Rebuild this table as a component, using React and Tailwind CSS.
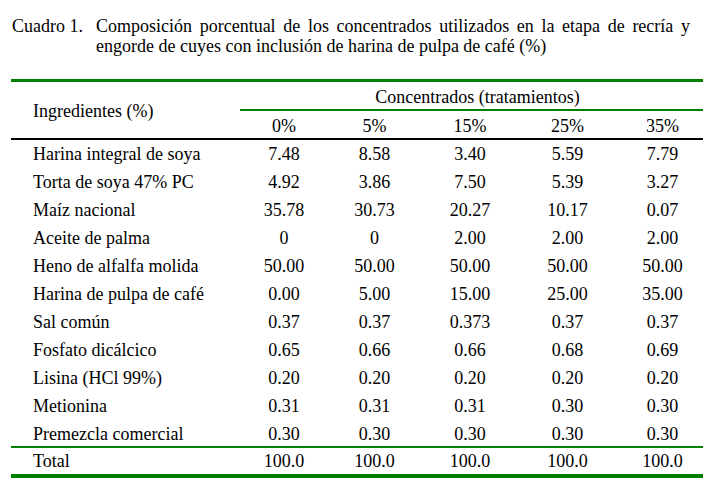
import React from 'react';

const rows = [
    ['Harina integral de soya', '7.48', '8.58', '3.40', '5.59', '7.79'],
    ['Torta de soya 47% PC', '4.92', '3.86', '7.50', '5.39', '3.27'],
    ['Maíz nacional', '35.78', '30.73', '20.27', '10.17', '0.07'],
    ['Aceite de palma', '0', '0', '2.00', '2.00', '2.00'],
    ['Heno de alfalfa molida', '50.00', '50.00', '50.00', '50.00', '50.00'],
    ['Harina de pulpa de café', '0.00', '5.00', '15.00', '25.00', '35.00'],
    ['Sal común', '0.37', '0.37', '0.373', '0.37', '0.37'],
    ['Fosfato dicálcico', '0.65', '0.66', '0.66', '0.68', '0.69'],
    ['Lisina (HCl 99%)', '0.20', '0.20', '0.20', '0.20', '0.20'],
    ['Metionina', '0.31', '0.31', '0.31', '0.30', '0.30'],
    ['Premezcla comercial', '0.30', '0.30', '0.30', '0.30', '0.30'],
];

const cols = 'grid grid-cols-[229px_88px_93px_98px_97px_87px]';

function Row({ cells, height = 'h-[28px]' }) {
    return (
        <div className={`${cols} ${height} items-center`}>
            <div className="pl-[22px] whitespace-nowrap">{cells[0]}</div>
            {cells.slice(1).map((c, i) => (
                <div key={i} className={`text-center ${i === 4 ? 'pl-[6px]' : ''}`}>{c}</div>
            ))}
        </div>
    );
}

export default function App() {
    return (
        <div className="w-[721px] h-[498px] bg-white text-black text-[18px] leading-[20px] font-['Liberation_Serif','Times_New_Roman',serif] overflow-hidden">
            <div className="flex pt-[16px] pl-[12px]">
                <div className="w-[84px] shrink-0">Cuadro 1.</div>
                <div className="w-[594px]">
                    <div className="text-justify [text-align-last:justify]">
                        Composición porcentual de los concentrados utilizados en la etapa de recría y
                    </div>
                    <div>engorde de cuyes con inclusión de harina de pulpa de café (%)</div>
                </div>
            </div>

            <div className="ml-[11px] w-[692px] mt-[23px]">
                <div className="h-[3px] bg-[#008000]" />
                <div className="flex">
                    <div className="w-[229px] h-[56px] flex items-center pl-[22px] pt-[1px]">Ingredientes (%)</div>
                    <div className="flex-1">
                        <div className="h-[27px] flex items-center justify-center pt-[2px] pl-[12px]">Concentrados (tratamientos)</div>
                        <div className="h-[2px] bg-[#008000]" />
                        <div className="grid grid-cols-[88px_93px_98px_97px_87px] h-[27px] items-center pt-[3px]">
                            {['0%', '5%', '15%', '25%', '35%'].map((h, i) => (
                                <div key={h} className={`text-center ${i === 4 ? 'pl-[6px]' : ''}`}>{h}</div>
                            ))}
                        </div>
                    </div>
                </div>
                <div className="h-[2px] bg-black" />
                {rows.map(r => <Row key={r[0]} cells={r} />)}
                <div className="h-[2px] bg-[#008000] -mt-[2px]" />
                <Row cells={['Total', '100.0', '100.0', '100.0', '100.0', '100.0']} height="h-[26px]" />
                <div className="h-[4px] bg-[#008000]" />
            </div>
        </div>
    );
}
